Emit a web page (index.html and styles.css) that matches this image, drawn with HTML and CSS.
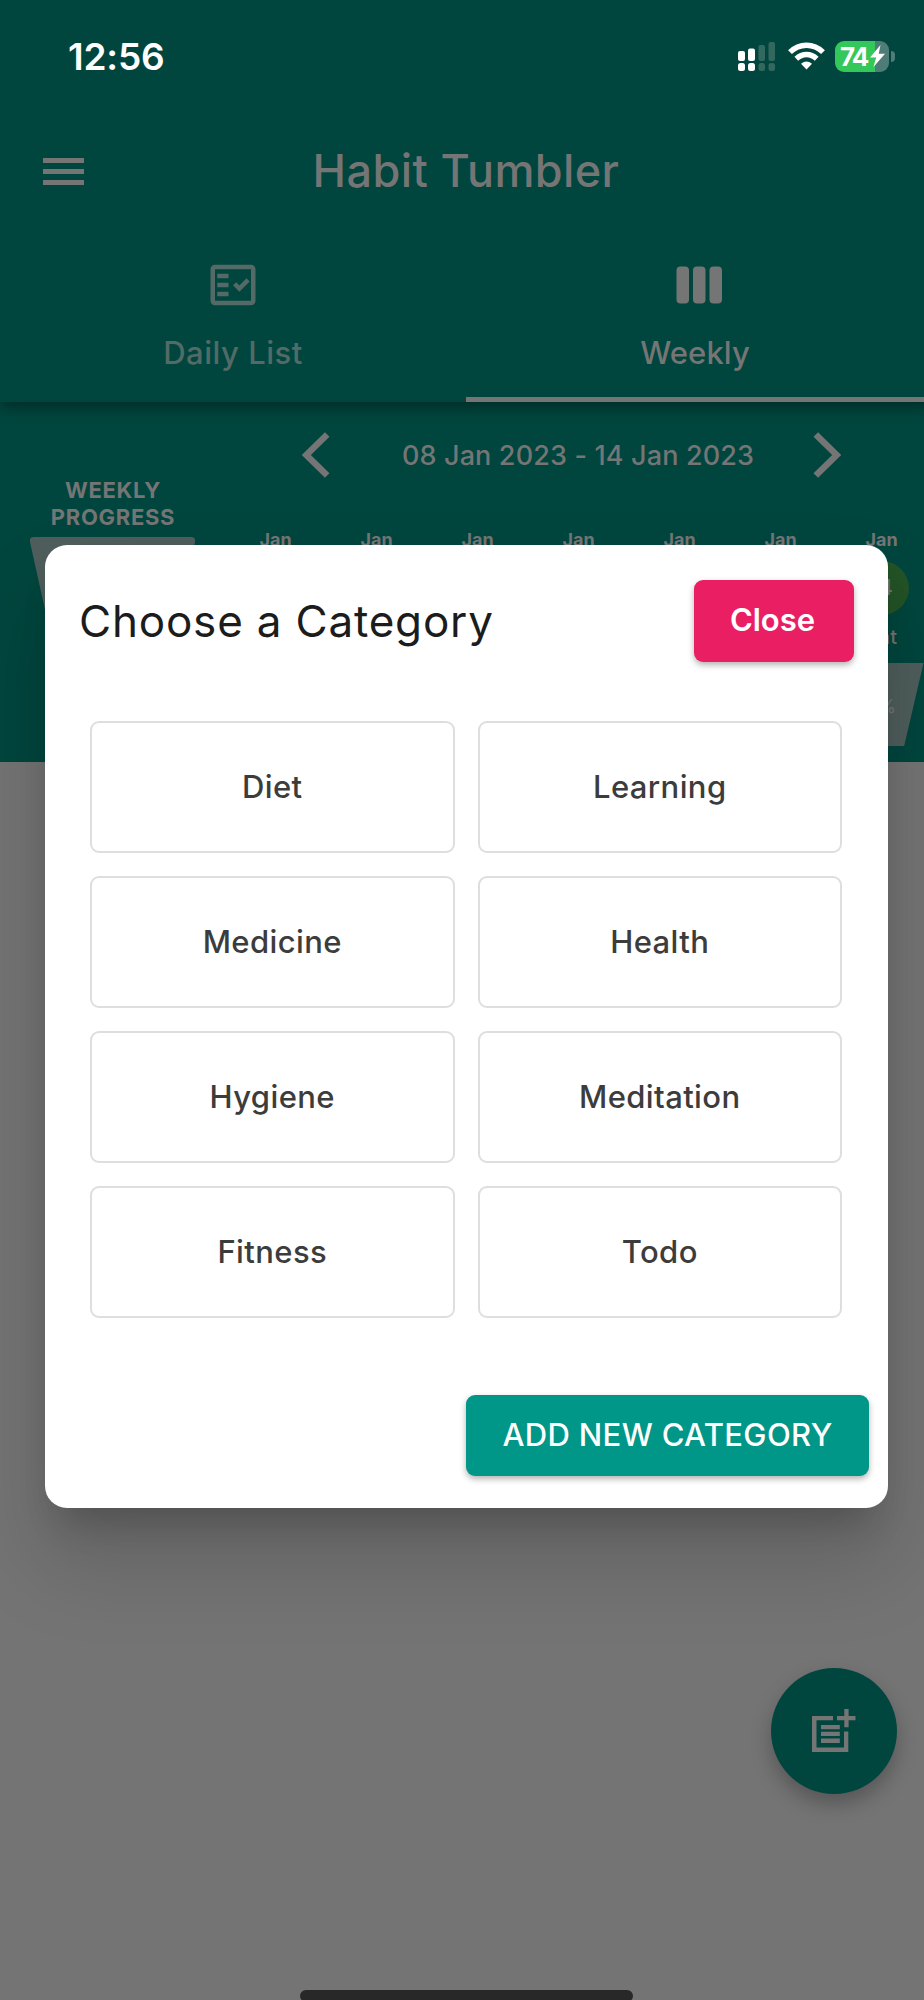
FILE: index.html
```html
<!DOCTYPE html>
<html lang="en">
<head>
<meta charset="utf-8">
<title>Habit Tumbler</title>
<link rel="stylesheet" href="styles.css">
</head>
<body>
<div class="screen">
  <header class="header">
    <div class="status">
      <span class="time">12:56</span>
      <svg class="signal" width="38" height="30" viewBox="0 0 38 30">
        <g fill="#fff"><rect x="0" y="10" width="7" height="10" rx="2"/><rect x="10" y="7.500" width="7" height="12.500" rx="2"/><rect x="0" y="22" width="7" height="8" rx="2.500"/><rect x="10" y="22" width="7" height="8" rx="2.500"/></g>
        <g fill="#33685f"><rect x="20.500" y="4" width="6.500" height="16" rx="2"/><rect x="30.500" y="1" width="6.500" height="19" rx="2"/><rect x="20.500" y="22" width="6.500" height="8" rx="2.500"/><rect x="30.500" y="22" width="6.500" height="8" rx="2.500"/></g>
      </svg>
      <svg class="wifi" width="37" height="28" viewBox="0 0 37 28">
        <g fill="none" stroke="#fff" stroke-width="5.400"><path d="M2 10.200Q9 3.200 18.500 3.200T35 10.200"/><path d="M8.300 16.800Q12.800 12.500 18.500 12.500T28.700 16.800"/></g>
        <path fill="#fff" d="M13 21.800Q18.500 17.200 24 21.800L18.500 27.600Z"/>
      </svg>
      <div class="battery"><span>74</span>
        <svg width="15" height="22" viewBox="0 0 15 22"><path fill="#fff" d="M10.500 0L0 12.500H6L3.500 22L15 8.800H8.700Z"/></svg>
      </div>
      <span class="battery-cap"></span>
    </div>
    <div class="appbar">
      <div class="menu"><i></i><i></i><i></i></div>
      <h1>Habit Tumbler</h1>
    </div>
    <nav class="tabs">
      <div class="tab">
        <svg width="54" height="54" viewBox="0 0 24 24" fill="currentColor"><path fill-rule="evenodd" d="M20 3H4C2.900 3 2 3.900 2 5v14c0 1.100.9 2 2 2h16c1.100 0 2-.9 2-2V5c0-1.100-.9-2-2-2zM20 19H4V5h16z"/><path d="M19.410 10.420L17.990 9l-3.170 3.170-1.410-1.420L12 12.160 14.820 15zM5 7h5v2H5zM5 11h5v2H5zM5 15h5v2H5z"/></svg>
        <span>Daily List</span>
      </div>
      <div class="tab active">
        <svg width="54" height="54" viewBox="0 0 54 54" fill="currentColor"><rect x="4.500" y="8.500" width="12.500" height="37" rx="4"/><rect x="21" y="8.500" width="12.500" height="37" rx="4"/><rect x="37.500" y="8.500" width="12.500" height="37" rx="4"/></svg>
        <span>Weekly</span>
      </div>
    </nav>
  </header>
  <main class="week">
    <section class="progress">
      <h2>WEEKLY<br>PROGRESS</h2>
      <svg width="165" height="208" viewBox="0 0 165 208"><path fill="#4f5e5c" d="M4 0H161Q166 0 165 5L121 204Q120 208 116 208H49Q45 208 44 204L0 5Q-1 0 4 0Z"/></svg>
    </section>
    <section class="calendar">
      <div class="range">
        <svg width="28" height="46" viewBox="0 0 28 46"><path d="M25.200 2.500L4.300 23L25.200 43.500"/></svg>
        <span>08 Jan 2023 - 14 Jan 2023</span>
        <svg width="28" height="46" viewBox="0 0 28 46"><path d="M2.800 2.500L23.700 23L2.800 43.500"/></svg>
      </div>
      <div class="days">
        <div class="day">Jan</div><div class="day">Jan</div><div class="day">Jan</div><div class="day">Jan</div><div class="day">Jan</div><div class="day">Jan</div>
        <div class="day">Jan
          <b class="date">14</b>
          <span class="name">Sat</span>
          <span class="cup">0%</span>
        </div>
      </div>
    </section>
  </main>
  <div class="fab">
    <svg width="44" height="44" viewBox="0 0 44 44" fill="#757575"><path d="M0 7H21V11.300H4.500V38.500H32V22.500H36.300V43H0zM32.300 0H36.600V7H43.500V11.300H36.600V18.300H32.300V11.300H25V7H32.300zM9 16H27.800V20.300H9zM9 22.800H27.800V27.100H9zM9 29.600H27.800V34H9z"/></svg>
  </div>
  <div class="home-bar"></div>
  <div class="dialog" role="dialog">
    <div class="dialog-head">
      <h3>Choose a Category</h3>
      <button class="btn close">Close</button>
    </div>
    <div class="grid">
      <div class="card">Diet</div><div class="card">Learning</div>
      <div class="card">Medicine</div><div class="card">Health</div>
      <div class="card">Hygiene</div><div class="card">Meditation</div>
      <div class="card">Fitness</div><div class="card">Todo</div>
    </div>
    <button class="btn add">ADD NEW CATEGORY</button>
  </div>
</div>
</body>
</html>
```

FILE: styles.css
```css
* { box-sizing: border-box; }
body { margin: 0; font-family: Inter, "Liberation Sans", sans-serif; }
h1, h2, h3 { margin: 0; }
svg { display: block; flex: none; }
.screen { position: relative; width: 924px; height: 2000px; overflow: hidden; background: #747474; }

.header { position: relative; width: 932px; height: 402px; background: #00463e; color: #757575; box-shadow: 0 5px 14px rgba(0,0,0,.4); }
.status { display: flex; align-items: center; height: 112px; padding-left: 68px; color: #fff; }
.time { flex: none; width: 670px; font-size: 37px; font-weight: 600; letter-spacing: -.2px; }
.wifi { margin-left: 12px; }
.battery { display: flex; align-items: center; gap: 1px; flex: none; width: 54px; height: 31px; margin-left: 10px; padding-left: 5px; border-radius: 9px; background: linear-gradient(90deg, #34c759 75%, #4e7d77 75%); }
.battery span { font-size: 26px; font-weight: 700; line-height: 31px; letter-spacing: -1.800px; width: 29px; }
.battery-cap { width: 4px; height: 11px; margin-left: 2px; border-radius: 0 4px 4px 0; background: #4e7d77; }
.appbar { display: grid; grid-template-columns: 84px 1fr 84px; align-items: center; height: 118px; }
.menu { display: grid; gap: 6px; padding: 1px 0 0 43px; }
.menu i { height: 5px; background: #757575; }
.appbar h1 { font-size: 45px; font-weight: 500; line-height: 54px; text-align: center; letter-spacing: .4px; }
.tabs { display: grid; grid-template-columns: 466px 466px; height: 172px; }
.tab { display: flex; flex-direction: column; align-items: center; gap: 23px; padding-top: 28px; border-bottom: 5px solid transparent; color: #536a66; font-size: 31px; font-weight: 500; line-height: 36px; letter-spacing: .5px; }
.tab.active { color: #757575; border-color: #757575; letter-spacing: .1px; }
.tab.active span { padding-right: 8px; }

.week { display: flex; width: 932px; height: 360px; background: #00463e; color: #757575; }
.progress { width: 227px; padding: 75px 0 0 30px; }
.progress h2 { width: 166px; margin-bottom: 6px; font-size: 22px; font-weight: 700; line-height: 27px; text-align: center; letter-spacing: .7px; }
.range { display: flex; align-items: center; height: 46px; margin: 30px 0 51px; padding-left: 77px; font-size: 27px; font-weight: 500; letter-spacing: .15px; }
.range span { width: 483px; padding-left: 13px; text-align: center; }
.range path { fill: none; stroke: #757575; stroke-width: 6.500; }
.days { display: grid; grid-template-columns: repeat(7, 101px); }
.day { display: flex; flex-direction: column; align-items: center; font-size: 18px; font-weight: 700; line-height: 22px; }
.date { width: 54px; height: 54px; margin-top: 10px; border-radius: 50%; background: #235326; font-size: 21px; font-weight: 500; line-height: 54px; text-align: center; }
.name { margin-top: 10px; font-size: 20px; font-weight: 500; line-height: 24px; }
.cup { width: 84px; height: 83px; margin-top: 14px; padding-top: 33px; background: #4f5e5c; clip-path: polygon(0 0, 100% 0, 77% 100%, 23% 100%); font-size: 18px; font-weight: 400; text-align: center; }

.fab { position: absolute; left: 770.500px; top: 1668px; display: grid; place-items: center; width: 126px; height: 126px; border-radius: 50%; background: #00463e; box-shadow: 0 10px 20px rgba(0,0,0,.26); }
.home-bar { position: absolute; left: 300px; top: 1990px; width: 333px; height: 12px; border-radius: 6px; background: #282828; }

.dialog { position: absolute; left: 45px; top: 544.500px; width: 842.500px; height: 963px; border-radius: 22px; background: #fff; box-shadow: 0 26px 36px -15px rgba(0,0,0,.2), 0 52px 84px 6px rgba(0,0,0,.15); display: flex; flex-direction: column; }
.dialog-head { display: flex; align-items: center; justify-content: space-between; padding: 35.500px 33.500px 0 34px; }
.dialog h3 { color: #1c1c1c; font-size: 44px; font-weight: 400; line-height: 54px; letter-spacing: .8px; }
.btn { border: 0; height: 81.500px; padding: 0 0 1px; border-radius: 9px; color: #fff; font-family: inherit; font-size: 31px; line-height: 36px; box-shadow: 0 3px 6px rgba(0,0,0,.3); }
.close { width: 160px; padding-right: 3px; background: #e91e63; font-weight: 600; }
.grid { display: grid; grid-template-columns: 364.500px 364.500px; grid-auto-rows: 132px; gap: 23px; margin: 59.500px 0 0 45px; }
.card { display: flex; align-items: center; justify-content: center; padding-bottom: 2px; border: 2px solid #dedede; border-radius: 9px; color: #3c3c3c; font-size: 31px; font-weight: 500; letter-spacing: .4px; }
.add { align-self: flex-end; width: 403px; margin: auto 18.500px 31.500px 0; background: #009688; font-weight: 500; letter-spacing: .35px; }
```
